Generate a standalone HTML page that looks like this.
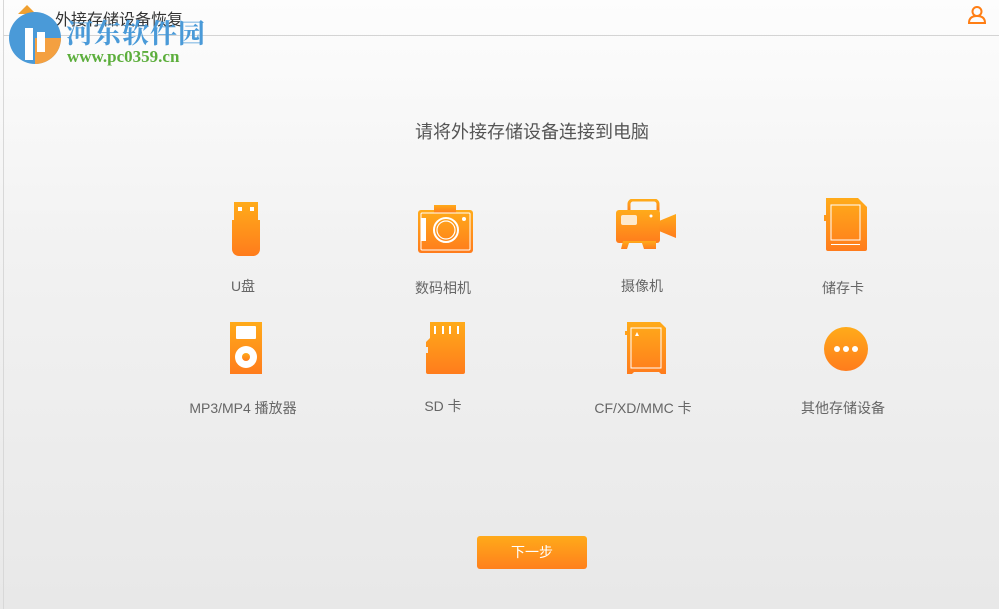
<!DOCTYPE html>
<html><head><meta charset="utf-8"><style>
body{margin:0;width:999px;height:609px;overflow:hidden;font-family:"Liberation Sans","Noto Sans CJK SC",sans-serif;}
.bg{position:absolute;left:0;top:0;width:999px;height:609px;background:linear-gradient(#fdfdfd,#f2f2f2 40%,#e8e8e8);}
.lb{position:absolute;left:3px;top:0;width:1px;height:609px;background:#d8d8d8}
.hd{position:absolute;left:3px;top:35px;width:996px;height:1px;background:#d4d4d4}
.t{position:absolute;color:#666;font-size:14px;white-space:nowrap;transform:translateX(-50%)}
svg{position:absolute}
.btn{position:absolute;left:477px;top:536px;width:110px;height:33px;border-radius:3px;background:linear-gradient(#ffaa1a,#ff801c);color:#fff;font-size:14px;text-align:center;line-height:33px}
</style></head><body>
<div class="bg"></div><div class="lb"></div><div class="hd"></div>
<div style="position:absolute;left:55px;top:6px;font-size:16px;color:#333">外接存储设备恢复</div>
<svg width="20" height="20" style="left:967px;top:5px" viewBox="0 0 20 20"><circle cx="10" cy="6.5" r="4.5" fill="none" stroke="#ff7e14" stroke-width="2"/><path d="M2 18 Q2 11 10 11 Q18 11 18 18 Z" fill="none" stroke="#ff7e14" stroke-width="2"/></svg>
<svg width="65" height="65" style="left:5px;top:2px" viewBox="0 0 65 65"><path d="M13 12 L22 3 L31 12Z" fill="#f0a030"/><circle cx="30" cy="36" r="26" fill="#4a9ad8"/><path d="M30 36 L56 36 A26 26 0 0 1 30 62Z" fill="#f4a040"/><rect x="20" y="26" width="8" height="32" fill="#fff"/><rect x="32" y="30" width="8" height="20" fill="#fff"/></svg>
<div style="position:absolute;left:66px;top:12px;font-size:27px;font-weight:bold;color:#4a9ad8;font-family:'Noto Serif CJK SC',serif;letter-spacing:1px">河东软件园</div>
<div style="position:absolute;left:67px;top:47px;font-size:17px;font-weight:bold;color:#5cae3c;font-family:'Liberation Serif',serif">www.pc0359.cn</div>

<div class="t" style="left:532px;top:118px;font-size:18px;color:#555">请将外接存储设备连接到电脑</div>
<svg width="0" height="0"><defs><linearGradient id="g" x1="0" y1="0" x2="0" y2="1"><stop offset="0" stop-color="#ffab1a"/><stop offset="1" stop-color="#ff7c1c"/></linearGradient></defs></svg>
<svg width="30" height="56" style="left:231px;top:201px" viewBox="0 0 30 56"><path d="M3 1 H27 V19 H29 V48 a7 7 0 0 1 -7 7 H8 a7 7 0 0 1 -7 -7 V19 H3Z" fill="url(#g)"/><rect x="7" y="6" width="4" height="4" fill="#fff"/><rect x="19" y="6" width="4" height="4" fill="#fff"/></svg>
<svg width="57" height="50" style="left:417px;top:204px" viewBox="0 0 57 50"><rect x="1" y="6" width="55" height="43" rx="3" fill="url(#g)"/><rect x="17" y="1" width="22" height="8" fill="url(#g)"/><rect x="4" y="9" width="49" height="37" rx="1" fill="none" stroke="#fff" stroke-width="1"/><rect x="4" y="14" width="5" height="23" fill="#fff"/><circle cx="29" cy="26" r="12" fill="none" stroke="#fff" stroke-width="2"/><circle cx="29" cy="26" r="9" fill="none" stroke="#fff" stroke-width="1.2"/><circle cx="47" cy="15" r="2" fill="#fff"/></svg>
<svg width="63" height="52" style="left:615px;top:199px" viewBox="0 0 63 52"><path d="M14 13 V5 a4 4 0 0 1 4 -4 h21 a4 4 0 0 1 4 4 V13" fill="none" stroke="url(#g)" stroke-width="3"/><rect x="1" y="11" width="44" height="33" rx="3" fill="url(#g)"/><path d="M44 22 L61 15 V39 L44 32Z" fill="url(#g)"/><path d="M8 42 L6 50 H12 L14 44 H27 L29 50 H41 L41 42Z" fill="url(#g)"/><rect x="6" y="16" width="16" height="10" rx="2" fill="#fde9cc"/><circle cx="36" cy="17" r="1.5" fill="#fff"/></svg>
<svg width="44" height="56" style="left:824px;top:197px" viewBox="0 0 44 56"><path d="M2 1 H34 L43 10 V52 a2 2 0 0 1 -2 2 H4 a2 2 0 0 1 -2 -2 V24 H0 V18 H2Z" fill="url(#g)"/><rect x="7" y="8" width="29" height="35" fill="none" stroke="#fff" stroke-width="1"/><rect x="7" y="47" width="29" height="1" fill="#fff"/></svg>
<svg width="33" height="54" style="left:230px;top:321px" viewBox="0 0 33 54"><rect x="0" y="1" width="32" height="52" fill="url(#g)"/><rect x="6" y="5" width="20" height="13" rx="1" fill="#fff"/><circle cx="16" cy="36" r="11" fill="#fff"/><circle cx="16" cy="36" r="4" fill="url(#g)"/></svg>
<svg width="42" height="54" style="left:425px;top:321px" viewBox="0 0 42 54"><path d="M5 1 H40 V51 a2 2 0 0 1 -2 2 H3 a2 2 0 0 1 -2 -2 V32 H3 V26 H1 V21 L5 17Z" fill="url(#g)"/><rect x="9" y="5" width="2" height="8" fill="#fff"/><rect x="17" y="5" width="2" height="8" fill="#fff"/><rect x="24" y="5" width="2" height="8" fill="#fff"/><rect x="32" y="5" width="2" height="8" fill="#fff"/></svg>
<svg width="42" height="54" style="left:625px;top:321px" viewBox="0 0 42 54"><path d="M2 1 H35 L41 7 V53 H36 L34 51 H9 L7 53 H2 V14 H0 V10 H2Z" fill="url(#g)"/><rect x="6" y="7" width="30" height="40" fill="none" stroke="#fff" stroke-width="1"/><path d="M10 15 L12 11 L14 15Z" fill="#fff"/></svg>
<svg width="46" height="46" style="left:823px;top:326px" viewBox="0 0 46 46"><circle cx="23" cy="23" r="22" fill="url(#g)"/><circle cx="14" cy="23" r="3" fill="#fff"/><circle cx="23" cy="23" r="3" fill="#fff"/><circle cx="32" cy="23" r="3" fill="#fff"/></svg>

<div class="t" style="left:243px;top:276px">U盘</div>
<div class="t" style="left:443px;top:278px">数码相机</div>
<div class="t" style="left:642px;top:276px">摄像机</div>
<div class="t" style="left:843px;top:278px">储存卡</div>
<div class="t" style="left:243px;top:398px">MP3/MP4 播放器</div>
<div class="t" style="left:443px;top:396px">SD 卡</div>
<div class="t" style="left:643px;top:398px">CF/XD/MMC 卡</div>
<div class="t" style="left:843px;top:398px">其他存储设备</div>
<div class="btn">下一步</div>
</body></html>
